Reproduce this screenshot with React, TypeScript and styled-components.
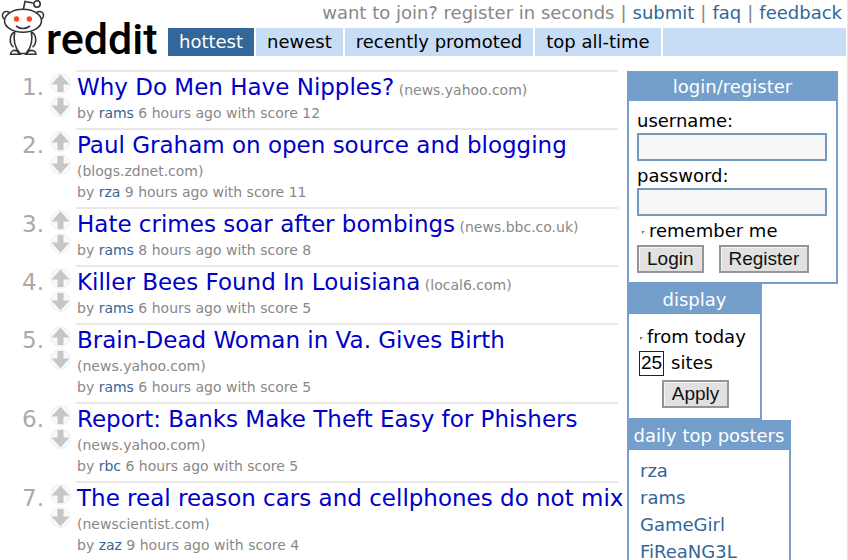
import React from "react";
import styled, { createGlobalStyle } from "styled-components";

const GlobalStyle = createGlobalStyle`
  * { box-sizing: border-box; }
  body {
    margin: 0;
    background: #fff;
    color: #000;
    font-family: Verdana, "DejaVu Sans", sans-serif;
    font-size: 18px;
    overflow-x: hidden;
  }
  a { text-decoration: none; }
  ::-webkit-scrollbar { display: none; }
`;

const Page = styled.div`
  display: flex;
  flex-direction: column;
  min-height: 100vh;
  border-right: 1px solid #e8e8e8;
`;

const Header = styled.header`
  display: flex;
  height: 56px;
`;

const Logo = styled.a`
  display: flex;
  flex: none;
  width: 168px;
  color: #000;
`;

const Wordmark = styled.span`
  font: 500 43px/56px Roboto, sans-serif;
  padding-top: 11px;
`;

const HeaderMain = styled.div`
  display: flex;
  flex: 1;
  flex-direction: column;
  justify-content: space-between;
`;

const UserBar = styled.div`
  display: flex;
  justify-content: flex-end;
  gap: 6px;
  padding-right: 5px;
  color: #888;
  line-height: 26px;
  white-space: nowrap;
`;

const BlueLink = styled.a`
  color: #369;
`;

const Tabs = styled.nav`
  display: flex;
  gap: 2px;
  margin-right: 1px;
  line-height: 28px;
  white-space: nowrap;
`;

const Tab = styled.a<{ $active?: boolean }>`
  padding: 0 11px;
  background: ${(p) => (p.$active ? "#336699" : "#c7ddf5")};
  color: ${(p) => (p.$active ? "#fff" : "#000")};
`;

const TabFill = styled.span`
  flex: 1;
  background: #c7ddf5;
`;

const Content = styled.div`
  display: flex;
  flex: 1;
  padding: 14px 9px 0 0;
`;

const Stories = styled.ol`
  flex: 1;
  min-width: 0;
  margin: 0;
  padding: 0;
  list-style: none;
`;

const Story = styled.li`
  display: flex;
  color: #888;
`;

const Rank = styled.span`
  width: 44px;
  padding-top: 2px;
  color: #aaa;
  font-size: 23px;
  line-height: 31px;
  text-align: right;
`;

const Votes = styled.div`
  display: flex;
  flex-direction: column;
  gap: 2px;
  width: 32px;
  padding: 3px 0 0 6px;
`;

const VoteButton = styled.button`
  width: 21px;
  height: 21px;
  padding: 0;
  border: 0;
  background: none;
  svg { display: block; }
`;

const Entry = styled.div`
  flex: 1;
  min-width: 0;
  padding: 0 1px 4px;
  border-top: 2px solid #e8e8e8;
  font-size: 14px;
  line-height: 21px;
`;

const Title = styled.a`
  color: #0000c8;
  font-size: 23px;
  line-height: 31px;
  white-space: nowrap;
`;

const Domain = styled.span`
  white-space: nowrap;
`;

const Sidebar = styled.aside`
  display: flex;
  flex-direction: column;
  align-items: flex-start;
  flex: none;
  width: 211px;
  margin-left: 9px;
  padding-top: 1px;
`;

const Panel = styled.section<{ $width: number; $open?: boolean }>`
  width: ${(p) => p.$width}px;
  flex: ${(p) => (p.$open ? "1" : "none")};
  border: 2px solid #749fca;
  ${(p) => p.$open && "border-bottom: 0;"}
`;

const PanelTitle = styled.h2`
  margin: 0;
  background: #749fca;
  color: #fff;
  font-size: 18px;
  font-weight: 400;
  line-height: 28px;
  text-align: center;
  white-space: nowrap;
`;

const LoginForm = styled.form`
  padding: 7px 9px 9px 8px;
`;

const FieldLabel = styled.label`
  display: block;
  line-height: 25px;
`;

const TextInput = styled.input`
  display: block;
  width: 100%;
  height: 28px;
  margin-bottom: 2px;
  border: 2px solid #7499be;
  border-radius: 0;
  background: #f7f7f7;
  font: inherit;
`;

const CheckLine = styled.label`
  display: flex;
  align-items: center;
  line-height: 26px;
  white-space: nowrap;
`;

const Check = styled.input`
  appearance: none;
  width: 9px;
  height: 6px;
  margin: 0 3px 0 0;
  flex: none;
  &::before {
    content: "";
    display: block;
    width: 3px;
    height: 3px;
    margin: 3px 0 0 5px;
    background: #777;
    clip-path: polygon(0 0, 100% 0, 0 100%);
  }
`;

const Buttons = styled.div`
  display: flex;
  gap: 15px;
  margin-top: 1px;
`;

const Button = styled.button`
  height: 28px;
  padding: 0 8px;
  border: 2px solid #959595;
  border-radius: 0;
  background: #e1e1e1;
  box-shadow: inset 1px 1px #f5f5f5;
  color: #111;
  font: 19px/24px "Liberation Sans", Arial, sans-serif;
`;

const DisplayForm = styled.form`
  padding: 10px 8px 10px 10px;
`;

const DisplayCheck = styled(Check)`
  width: 5px;
  &::before { margin-left: 1px; }
`;

const SitesLine = styled.label`
  display: flex;
  align-items: center;
  gap: 7px;
  line-height: 26px;
`;

const CountInput = styled.input`
  width: 25px;
  height: 25px;
  padding: 0;
  border: 1px solid #222;
  border-radius: 0;
  font: 19px "Liberation Sans", Arial, sans-serif;
  text-align: center;
`;

const ApplyLine = styled.div`
  display: flex;
  justify-content: center;
  padding-top: 4px;
`;

const Posters = styled.ul`
  margin: 0;
  padding: 7px 11px 0;
  list-style: none;
  line-height: 27px;
`;

const MASCOT_LINE = "#333";

function Mascot() {
  return (
    <svg width="46" height="56" viewBox="0 0 46 56" fill="#fff" stroke={MASCOT_LINE} strokeWidth="1.6" aria-hidden="true">
      <path d="M23 11 L25 1.5 L33 3" fill="none" />
      <circle cx="37" cy="4" r="3.2" />
      <circle cx="6.5" cy="15.5" r="4" />
      <circle cx="39.5" cy="15.5" r="4" />
      <path d="M15 32 C9 34 9 44 13.5 47" />
      <path d="M31 32 C37 34 37 44 32.5 47" />
      <path d="M10.5 54.3 C10.5 51 14 49.5 17 51 L20 54.3 Z" />
      <path d="M26 54.3 L29 51 C32 49.5 36 51 36 54.3 Z" />
      <path d="M15 30 C13 39 15 48 20 53.5 H26 C31 48 33 39 31 30 Z" />
      <ellipse cx="23" cy="20.8" rx="18.5" ry="11.5" />
      <circle cx="16.5" cy="19" r="2.7" fill="#ff4520" stroke="none" />
      <circle cx="29.3" cy="19" r="2.7" fill="#ff4520" stroke="none" />
      <path d="M16 26 Q23 31 30 26" fill="none" />
    </svg>
  );
}

function Arrow({ down }: { down?: boolean }) {
  return (
    <svg width="21" height="21" viewBox="0 0 21 21" aria-hidden="true">
      <circle cx="10.5" cy="10.5" r="9.8" fill="#f9f9f9" stroke="#eeeeee" />
      <path
        d="M10.5 1.5 L19.5 11.5 H13.5 V19 H7.5 V11.5 H1.5 Z"
        fill="#c6c6c6"
        transform={down ? "rotate(180 10.5 10.5)" : undefined}
      />
    </svg>
  );
}

const stories = [
  { title: "Why Do Men Have Nipples?", domain: "news.yahoo.com", user: "rams", hours: 6, score: 12 },
  { title: "Paul Graham on open source and blogging", domain: "blogs.zdnet.com", user: "rza", hours: 9, score: 11 },
  { title: "Hate crimes soar after bombings", domain: "news.bbc.co.uk", user: "rams", hours: 8, score: 8 },
  { title: "Killer Bees Found In Louisiana", domain: "local6.com", user: "rams", hours: 6, score: 5 },
  { title: "Brain-Dead Woman in Va. Gives Birth", domain: "news.yahoo.com", user: "rams", hours: 6, score: 5 },
  { title: "Report: Banks Make Theft Easy for Phishers", domain: "news.yahoo.com", user: "rbc", hours: 6, score: 5 },
  { title: "The real reason cars and cellphones do not mix", domain: "newscientist.com", user: "zaz", hours: 9, score: 4 },
];

const posters = ["rza", "rams", "GameGirl", "FiReaNG3L"];

export default function App() {
  return (
    <Page>
      <GlobalStyle />
      <Header>
        <Logo href="#">
          <Mascot />
          <Wordmark>reddit</Wordmark>
        </Logo>
        <HeaderMain>
          <UserBar>
            <span>want to join? register in seconds</span>
            <span>|</span>
            <BlueLink href="#">submit</BlueLink>
            <span>|</span>
            <BlueLink href="#">faq</BlueLink>
            <span>|</span>
            <BlueLink href="#">feedback</BlueLink>
          </UserBar>
          <Tabs>
            <Tab href="#" $active>hottest</Tab>
            <Tab href="#">newest</Tab>
            <Tab href="#">recently promoted</Tab>
            <Tab href="#">top all-time</Tab>
            <TabFill />
          </Tabs>
        </HeaderMain>
      </Header>
      <Content>
        <Stories>
          {stories.map((s, i) => (
            <Story key={s.title}>
              <Rank>{i + 1}.</Rank>
              <Votes>
                <VoteButton aria-label="Vote up"><Arrow /></VoteButton>
                <VoteButton aria-label="Vote down"><Arrow down /></VoteButton>
              </Votes>
              <Entry>
                <div>
                  <Title href="#">{s.title}</Title> <Domain>({s.domain})</Domain>
                </div>
                <div>
                  by <BlueLink href="#">{s.user}</BlueLink> {s.hours} hours ago with score {s.score}
                </div>
              </Entry>
            </Story>
          ))}
        </Stories>
        <Sidebar>
          <Panel $width={211}>
            <PanelTitle>login/register</PanelTitle>
            <LoginForm>
              <FieldLabel htmlFor="user">username:</FieldLabel>
              <TextInput id="user" type="text" />
              <FieldLabel htmlFor="pass">password:</FieldLabel>
              <TextInput id="pass" type="password" />
              <CheckLine><Check type="checkbox" />remember me</CheckLine>
              <Buttons>
                <Button type="button">Login</Button>
                <Button type="button">Register</Button>
              </Buttons>
            </LoginForm>
          </Panel>
          <Panel $width={135}>
            <PanelTitle>display</PanelTitle>
            <DisplayForm>
              <CheckLine><DisplayCheck type="checkbox" />from today</CheckLine>
              <SitesLine><CountInput type="text" defaultValue="25" />sites</SitesLine>
              <ApplyLine><Button type="button">Apply</Button></ApplyLine>
            </DisplayForm>
          </Panel>
          <Panel $width={164} $open>
            <PanelTitle>daily top posters</PanelTitle>
            <Posters>
              {posters.map((p) => (
                <li key={p}><BlueLink href="#">{p}</BlueLink></li>
              ))}
            </Posters>
          </Panel>
        </Sidebar>
      </Content>
    </Page>
  );
}
